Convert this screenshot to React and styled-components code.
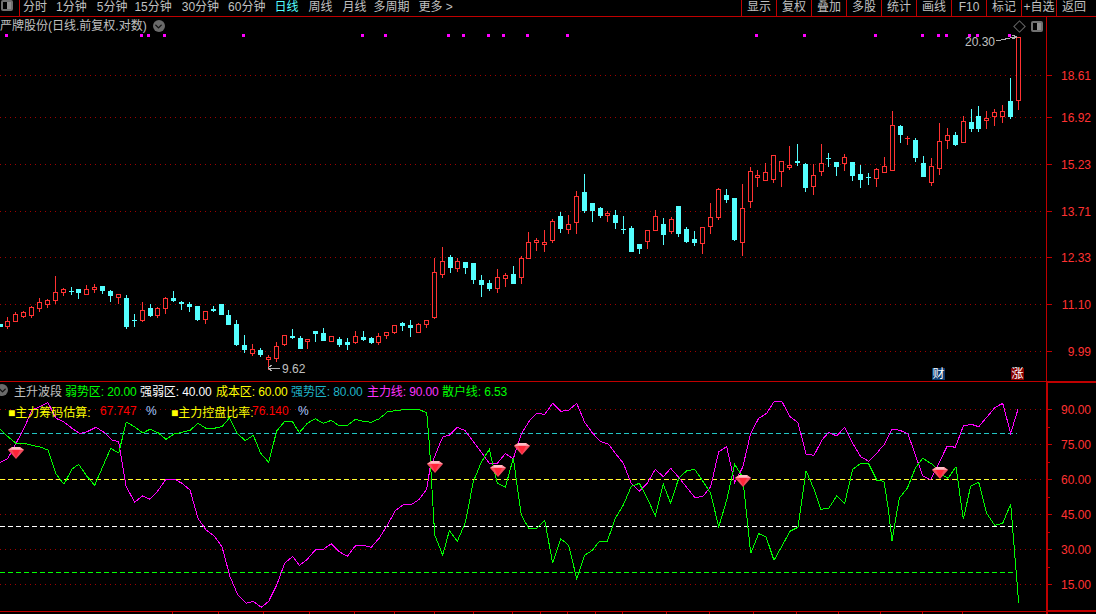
import React from "react";
import styled, { createGlobalStyle } from "styled-components";
import { ChevronDown } from "lucide-react";

const RED_LINE = "#c00000";
const UP = "#ff3232";
const DOWN = "#54ffff";

const GlobalStyle = createGlobalStyle`
  html, body {
    margin: 0;
    padding: 0;
    background: #000;
  }
  body {
    font-family: "Liberation Sans", "Noto Sans CJK SC", sans-serif;
    font-size: 12px;
    color: #c0c0c0;
  }
`;

// [colour, body top, body bottom, wick top, wick bottom], one per trading day
const candles = [
  "c 324 327 324 327", "r 321 327 317 329", "r 314 322 312 322", "r 312 317 311 318", "r 307 316 306 318",
  "r 302 309 298 312", "r 300 305 299 308", "r 292 301 276 304", "r 289 293 288 296", "c 291 292 287 295",
  "c 289 293 289 299", "r 289 295 285 295", "r 287 290 284 293", "c 286 291 286 294", "c 291 296 290 302",
  "r 294 298 294 304", "c 298 327 295 329", "c 320 321 314 327", "r 310 321 302 322", "c 308 316 304 317",
  "r 308 316 307 318", "r 298 309 297 314", "c 298 301 291 302", "c 302 304 301 310", "c 304 307 302 312",
  "c 306 320 306 321", "r 311 320 311 324", "c 309 311 306 312", "c 304 315 304 315", "c 315 325 310 325",
  "c 324 345 320 346", "c 345 350 335 353", "r 349 354 344 356", "c 350 355 348 357", "r 357 360 355 370",
  "r 346 359 342 362", "r 335 345 335 346", "c 336 338 329 339", "c 338 349 336 349",
  "r 339 342 339 349", "c 331 334 331 342", "c 333 341 328 341", "r 336 342 336 342", "c 339 345 337 347",
  "c 342 345 338 350", "r 336 343 331 344", "c 337 340 331 341", "c 338 343 337 344", "r 336 343 333 345",
  "r 332 336 332 339", "r 325 333 325 334", "c 323 326 322 331", "c 325 328 320 337", "r 324 333 323 333",
  "r 320 325 320 328", "r 272 318 258 319", "r 261 275 247 278", "c 257 268 255 273", "r 261 269 258 272",
  "c 262 268 262 274", "c 263 280 263 284", "c 280 285 275 297", "c 283 289 280 291", "r 277 289 269 293",
  "r 275 279 273 287", "c 274 284 266 284", "r 258 278 256 284", "r 242 259 232 259", "r 240 243 238 251",
  "r 242 245 230 252", "r 221 241 219 243", "c 216 229 212 233", "r 224 230 215 234", "r 196 223 191 234",
  "c 192 211 174 213", "c 203 211 203 222", "c 208 216 207 218",
  "r 213 216 211 222", "c 215 223 210 229", "c 229 230 216 234", "c 228 252 226 252", "c 244 249 244 254",
  "r 230 242 230 249", "r 216 231 210 231", "c 224 235 218 245", "r 219 232 217 234", "c 206 234 206 237",
  "c 229 242 227 243", "c 239 243 231 246", "r 227 244 227 254", "r 217 227 203 234", "r 189 218 188 220",
  "c 195 200 189 203", "c 198 240 198 241", "r 208 243 184 256", "r 171 202 167 208", "r 175 178 170 187",
  "r 172 181 163 181", "r 155 180 155 183", "r 161 172 161 187", "r 165 168 146 170", "c 161 163 144 166",
  "c 164 188 163 192", "r 175 187 164 195", "r 163 172 144 176", "c 158 159 153 167", "c 162 167 162 176",
  "r 157 164 154 171", "c 162 176 162 181", "c 174 180 165 188", "c 177 178 173 185", "r 169 179 168 187",
  "r 166 173 157 173", "r 125 171 111 171",
  "c 126 135 125 143", "r 138 139 136 145", "c 140 158 138 162", "c 163 177 156 177", "r 166 183 158 186",
  "r 141 169 123 175", "r 135 141 128 149", "c 135 145 132 146", "r 121 143 116 143", "c 122 129 109 132",
  "c 116 129 106 132", "r 118 121 111 129", "r 112 117 109 126", "r 111 117 105 123", "c 101 117 78 119",
  "r 37 101 37 110",
].map((row, i) => {
  const [kind, top, bottom, wickTop, wickBottom] = row.split(" ");
  return {
    up: kind === "r",
    x: Math.round(7.4 + 7.895 * (i - 1)),
    top: +top,
    bottom: +bottom,
    wickTop: +wickTop,
    wickBottom: +wickBottom,
  };
});

const signalDots = [6, 141, 148, 164, 243, 362, 385, 448, 463, 488, 503, 527, 567, 756, 804, 875, 922, 938, 946, 969, 977, 1009];
const priceLevels = [
  [75, "18.61"], [117, "16.92"], [164, "15.23"], [211, "13.71"], [257, "12.33"], [304, "11.10"], [351, "9.99"],
];
const indicatorLevels = [
  [409, "90.00"], [444, "75.00"], [479, "60.00"], [514, "45.00"], [549, "30.00"], [584, "15.00"],
];
const minorTicks = [427, 462, 497, 532, 567];
const zoneLines = [
  [433, "#22c4c4"], [479, "#ffff33"], [526, "#ffffff"], [572, "#00ff00"],
];
const timeTicks = [172, 218, 263, 309, 354, 394, 434, 473, 512, 540, 567, 595, 622, 666, 709, 753, 796, 838, 880, 922, 962];
const gems = [[16, 453], [435, 467], [498, 471], [522, 449], [743, 481], [940, 473]];

// traced stretches of the two indicator lines, each in its own crop scale
const trace = (ox, oy, text) =>
  text.trim().split(/\s+/).map((p) => {
    const [u, v] = p.split(",");
    return `${(ox + u / 3).toFixed(1)},${(oy + v / 3).toFixed(1)}`;
  }).join(" ");

const magentaLine = [
  trace(0, 400, "0,188 24,175 48,130 72,85 96,30 120,20 144,8 168,55 192,66 216,85 240,101 264,94 288,82 312,97 336,120 356,125 378,258 404,307 428,287 450,298 474,272 498,237 522,237 546,250 570,270 594,355 618,390 642,407 666,440 690,530 714,586 738,610 760,604 784,622 806,604 830,555 854,490 878,469 898,496 922,478 946,450 970,448 994,431 1018,455 1042,469 1066,438 1090,436 1114,442 1138,414 1162,376 1186,332 1210,314 1234,314 1258,298 1280,268 1290,205 1304,170"),
  trace(440, 400, "0,130 10,110 28,106 52,82 76,92 100,125 124,157 148,190 172,190 196,161 220,176 244,102 268,63 290,40 314,43 338,10 362,34 386,31 410,10 434,67 458,100 482,125 506,133 530,165 550,190 574,250 598,274 622,250 646,208 670,230 692,205 716,232 740,262 764,292 788,290 812,260 836,155 860,140 884,248 908,202 932,100 956,55 980,40 1002,5 1026,5 1050,50 1074,68 1098,162 1122,166 1146,120 1166,97 1190,108 1214,82 1238,130 1262,170 1286,184 1310,160"),
  trace(880, 360, "0,268 12,255 36,208 60,211 84,222 108,290 128,348 152,360 176,310 202,258 226,262 250,198 274,193 296,200 320,172 344,143 368,130 392,220 414,148"),
].join(" ");

const greenLine = [
  trace(0, 400, "0,88 24,110 48,130 72,130 96,136 120,141 144,150 168,222 192,253 216,207 236,193 260,228 284,256 308,200 332,145 356,159 379,66 403,80 428,99 450,88 474,98 498,118 522,102 546,97 570,91 594,70 618,85 642,85 666,80 688,54 712,100 736,122 760,106 782,160 806,187 830,93 854,64 878,66 898,98 922,70 946,56 970,70 994,61 1018,78 1042,76 1066,58 1090,64 1114,67 1138,56 1162,36 1186,32 1210,29 1234,28 1258,29 1280,38 1288,130 1304,405"),
  trace(440, 400, "0,445 8,466 28,392 52,424 76,368 100,245 124,187 148,148 172,250 196,262 220,175 244,345 266,385 290,385 314,361 338,490 362,416 386,436 410,536 434,466 458,450 478,424 502,424 526,355 550,315 574,259 598,250 622,295 646,348 670,253 692,310 716,235 740,212 764,208 788,243 812,280 836,381 860,300 884,193 908,232 932,460 956,401 978,410 1002,481 1026,438 1050,394 1074,382 1098,212 1122,268 1142,328 1166,325 1190,288 1214,310 1238,208 1262,190 1286,192 1310,240"),
  trace(880, 360, "0,360 12,365 24,440 36,542 58,414 82,385 106,325 128,295 160,315 180,340 204,355 228,320 250,478 272,378 296,367 320,460 344,496 368,490 392,432 416,730"),
].join(" ");

const Page = styled.div`
  width: 1096px;
  height: 614px;
  overflow: hidden;
  background: #000;
`;

const Toolbar = styled.header`
  display: flex;
  justify-content: space-between;
  height: 16px;
  border-bottom: 1px solid ${RED_LINE};
  line-height: 15px;
  white-space: nowrap;
`;

const NavGroup = styled.nav`
  display: flex;
  align-items: flex-start;
`;

const LayoutCell = styled.div`
  width: 20px;
  height: 16px;
  box-sizing: border-box;
  padding-left: 1px;
  border-right: 1px solid ${RED_LINE};
`;

const LayoutIcon = styled.span`
  display: block;
  width: 12px;
  height: 11px;
  box-sizing: border-box;
  border: 2px solid #707070;
  border-radius: 2px;
  background: linear-gradient(to right, #000 50%, #909090 50%);
`;

const NavItem = styled.span`
  margin-left: ${(p) => p.$gap}px;
  color: ${(p) => (p.$active ? DOWN : "#c0c0c0")};
`;

const ToolButtons = styled.div`
  display: grid;
  grid-template-columns: repeat(10, 35px);
  margin-right: 5px;
`;

const ToolButton = styled.span`
  height: 16px;
  border-left: 1px solid ${RED_LINE};
  text-align: center;
  color: #c0c0c0;
`;

const Pane = styled.section`
  position: relative;
  height: ${(p) => p.$height}px;
  border-bottom: ${(p) => (p.$divided ? `1px solid ${RED_LINE}` : "none")};
`;

const ChartSvg = styled.svg`
  display: block;
  font-family: "Liberation Sans", sans-serif;
  font-size: 12px;
`;

const TitleBar = styled.div`
  position: absolute;
  left: 0;
  top: 1px;
  display: flex;
  align-items: center;
  gap: 6px;
  line-height: 16px;
  white-space: nowrap;
`;

const RoundChevron = styled.span`
  display: flex;
  flex: none;
  align-items: center;
  justify-content: center;
  width: 12px;
  height: 12px;
  border-radius: 50%;
  background: #6a6a6a;
  color: #111;
  margin-left: ${(p) => p.$offset || 0}px;
`;

const PaneTools = styled.div`
  position: absolute;
  right: 53px;
  top: 4px;
  display: flex;
  align-items: center;
  gap: 7px;
`;

const DiamondMark = styled.span`
  display: block;
  width: 7px;
  height: 7px;
  border: 1px solid #666;
  transform: rotate(45deg);
`;

const Badge = styled.span`
  position: absolute;
  left: ${(p) => p.$x}px;
  bottom: 1px;
  width: 13px;
  height: 12px;
  line-height: 12px;
  text-align: center;
  font-size: 12px;
  color: #fff;
  background: ${(p) => p.$bg};
`;

const LegendBlock = styled.div`
  position: absolute;
  left: 0;
  top: 0;
  white-space: nowrap;
`;

const LegendRow = styled.div`
  display: flex;
  align-items: center;
  height: 16px;
`;

const IndicatorName = styled.span`
  width: 51px;
  flex: none;
  box-sizing: content-box;
  padding-left: 6px;
  color: #c0c0c0;
`;

const LegendEntry = styled.span`
  width: ${(p) => p.$width}px;
  flex: none;
  color: ${(p) => p.$color};
  letter-spacing: -0.1px;
`;

const StatRow = styled.div`
  display: flex;
  align-items: center;
  height: 16px;
  margin-top: 5px;
  padding-left: 8px;
`;

const StatLabel = styled.span`
  width: ${(p) => p.$width}px;
  flex: none;
  color: #ffff00;
`;

const StatValue = styled.span`
  width: ${(p) => p.$width}px;
  flex: none;
  color: #ff0000;
`;

const StatUnit = styled.span`
  width: ${(p) => p.$width}px;
  flex: none;
  color: #a8ccff;
`;

function Gem({ x, y }) {
  return (
    <g transform={`translate(${x} ${y})`} shapeRendering="auto">
      <polygon points="-8,-3 -4,-6 4,-6 8,-3 0,6" fill="#f24a5c" />
      <polygon points="-8,-3 -4,-6 4,-6 8,-3" fill="#ff9aa6" />
      <polygon points="-4,-3 4,-3 0,5" fill="#ff2438" />
      <line x1="-4" y1="-5" x2="4" y2="-5" stroke="#ffe0e4" />
    </g>
  );
}

function Candle({ up, x, top, bottom, wickTop, wickBottom }) {
  const color = up ? UP : DOWN;
  const flat = bottom - top <= 1;
  return (
    <g fill={color}>
      <rect x={x} y={wickTop} width={1} height={wickBottom - wickTop} />
      {flat ? (
        <rect x={x - 2} y={top} width={5} height={1} />
      ) : (
        <rect x={x - 2} y={top} width={5} height={bottom - top} />
      )}
      {up && !flat && <rect x={x - 1} y={top + 1} width={3} height={bottom - top - 2} fill="#000" />}
    </g>
  );
}

function PriceChart() {
  return (
    <ChartSvg width="1096" height="364" viewBox="0 17 1096 364" shapeRendering="crispEdges">
      {priceLevels.map(([y, label]) => (
        <g key={label}>
          <line x1="0" x2="1042" y1={y + 0.5} y2={y + 0.5} stroke="#a00000" strokeDasharray="1 4" />
          <line x1="1047" x2="1052" y1={y + 0.5} y2={y + 0.5} stroke={RED_LINE} />
          <text x="1091" y={y + 5} textAnchor="end" fill={UP}>{label}</text>
        </g>
      ))}
      {signalDots.map((x) => (
        <rect key={x} x={x - 1} y="34" width="3" height="3" fill="#ff00ff" />
      ))}
      {candles.map((c) => (
        <Candle key={c.x} {...c} />
      ))}
      <g stroke="#b0b0b0" fill="none">
        <polyline points="996,41 1015,37" />
        <polyline points="1012,35 1017,37 1012,39" />
        <polyline points="269,368 280,368" />
        <polyline points="272,365 268,368 272,371" />
      </g>
      <text x="965" y="46" fill="#c0c0c0">20.30</text>
      <text x="282" y="373" fill="#c0c0c0">9.62</text>
      <rect x="1046" y="17" width="1" height="364" fill={RED_LINE} />
    </ChartSvg>
  );
}

function IndicatorChart() {
  return (
    <ChartSvg width="1096" height="232" viewBox="0 382 1096 232" shapeRendering="crispEdges">
      {indicatorLevels.map(([y, label]) => (
        <g key={label}>
          <line x1="0" x2="1042" y1={y + 0.5} y2={y + 0.5} stroke="#a00000" strokeDasharray="1 4" />
          <line x1="1047" x2="1052" y1={y + 0.5} y2={y + 0.5} stroke={RED_LINE} />
          <text x="1091" y={y + 5} textAnchor="end" fill={UP}>{label}</text>
        </g>
      ))}
      {minorTicks.map((y) => (
        <line key={y} x1="1047" x2="1050" y1={y + 0.5} y2={y + 0.5} stroke={RED_LINE} />
      ))}
      {zoneLines.map(([y, color]) => (
        <line key={y} x1="0" x2="1017" y1={y + 0.5} y2={y + 0.5} stroke={color} strokeDasharray="5 3" />
      ))}
      <polyline points={magentaLine} fill="none" stroke="#ff00ff" />
      <polyline points={greenLine} fill="none" stroke="#00ff00" />
      {gems.map(([x, y]) => (
        <Gem key={x} x={x} y={y} />
      ))}
      <rect x="0" y="611" width="1046" height="1" fill={RED_LINE} />
      <rect x="1046" y="610" width="50" height="2" fill={RED_LINE} />
      {timeTicks.map((x) => (
        <rect key={x} x={x} y="612" width="1" height="2" fill={RED_LINE} />
      ))}
      <rect x="1046" y="382" width="50" height="1" fill={RED_LINE} />
      <rect x="1046" y="382" width="2" height="232" fill={RED_LINE} />
    </ChartSvg>
  );
}

const navItems = [
  ["分时", 3], ["1分钟", 9], ["5分钟", 10], ["15分钟", 7], ["30分钟", 10], ["60分钟", 9],
  ["日线", 9, true], ["周线", 10], ["月线", 10], ["多周期", 7], ["更多 >", 9],
];
const toolItems = ["显示", "复权", "叠加", "多股", "统计", "画线", "F10", "标记", "+自选", "返回"];
const legendItems = [
  ["弱势区: 20.00", "#00ff00", 75],
  ["强弱区: 40.00", "#ffffff", 76],
  ["成本区: 60.00", "#ffff00", 75],
  ["强势区: 80.00", "#1fb4c8", 76],
  ["主力线: 90.00", "#ff33ff", 75],
  ["散户线: 6.53", "#00ff00", 70],
];

export default function App() {
  return (
    <Page>
      <GlobalStyle />
      <Toolbar>
        <NavGroup>
          <LayoutCell>
            <LayoutIcon />
          </LayoutCell>
          {navItems.map(([label, gap, active]) => (
            <NavItem key={label} $gap={gap} $active={active}>{label}</NavItem>
          ))}
        </NavGroup>
        <ToolButtons>
          {toolItems.map((label) => (
            <ToolButton key={label}>{label}</ToolButton>
          ))}
        </ToolButtons>
      </Toolbar>
      <Pane $height={364} $divided>
        <PriceChart />
        <TitleBar>
          严牌股份(日线.前复权.对数)
          <RoundChevron>
            <ChevronDown size={11} strokeWidth={3} />
          </RoundChevron>
        </TitleBar>
        <PaneTools>
          <DiamondMark />
          <LayoutIcon />
        </PaneTools>
        <Badge $x={932} $bg="#0b3a6e">财</Badge>
        <Badge $x={1011} $bg="#860000">涨</Badge>
      </Pane>
      <Pane $height={232}>
        <IndicatorChart />
        <LegendBlock>
          <LegendRow>
            <RoundChevron $offset={-4}>
              <ChevronDown size={11} strokeWidth={3} />
            </RoundChevron>
            <IndicatorName>主升波段</IndicatorName>
            {legendItems.map(([label, color, width]) => (
              <LegendEntry key={label} $width={width} $color={color}>{label}</LegendEntry>
            ))}
          </LegendRow>
          <StatRow>
            <StatLabel $width={92}>■主力筹码估算:</StatLabel>
            <StatValue $width={46}>67.747</StatValue>
            <StatUnit $width={25}>%</StatUnit>
            <StatLabel $width={81}>■主力控盘比率:</StatLabel>
            <StatValue $width={46}>76.140</StatValue>
            <StatUnit $width={14}>%</StatUnit>
          </StatRow>
        </LegendBlock>
      </Pane>
    </Page>
  );
}
